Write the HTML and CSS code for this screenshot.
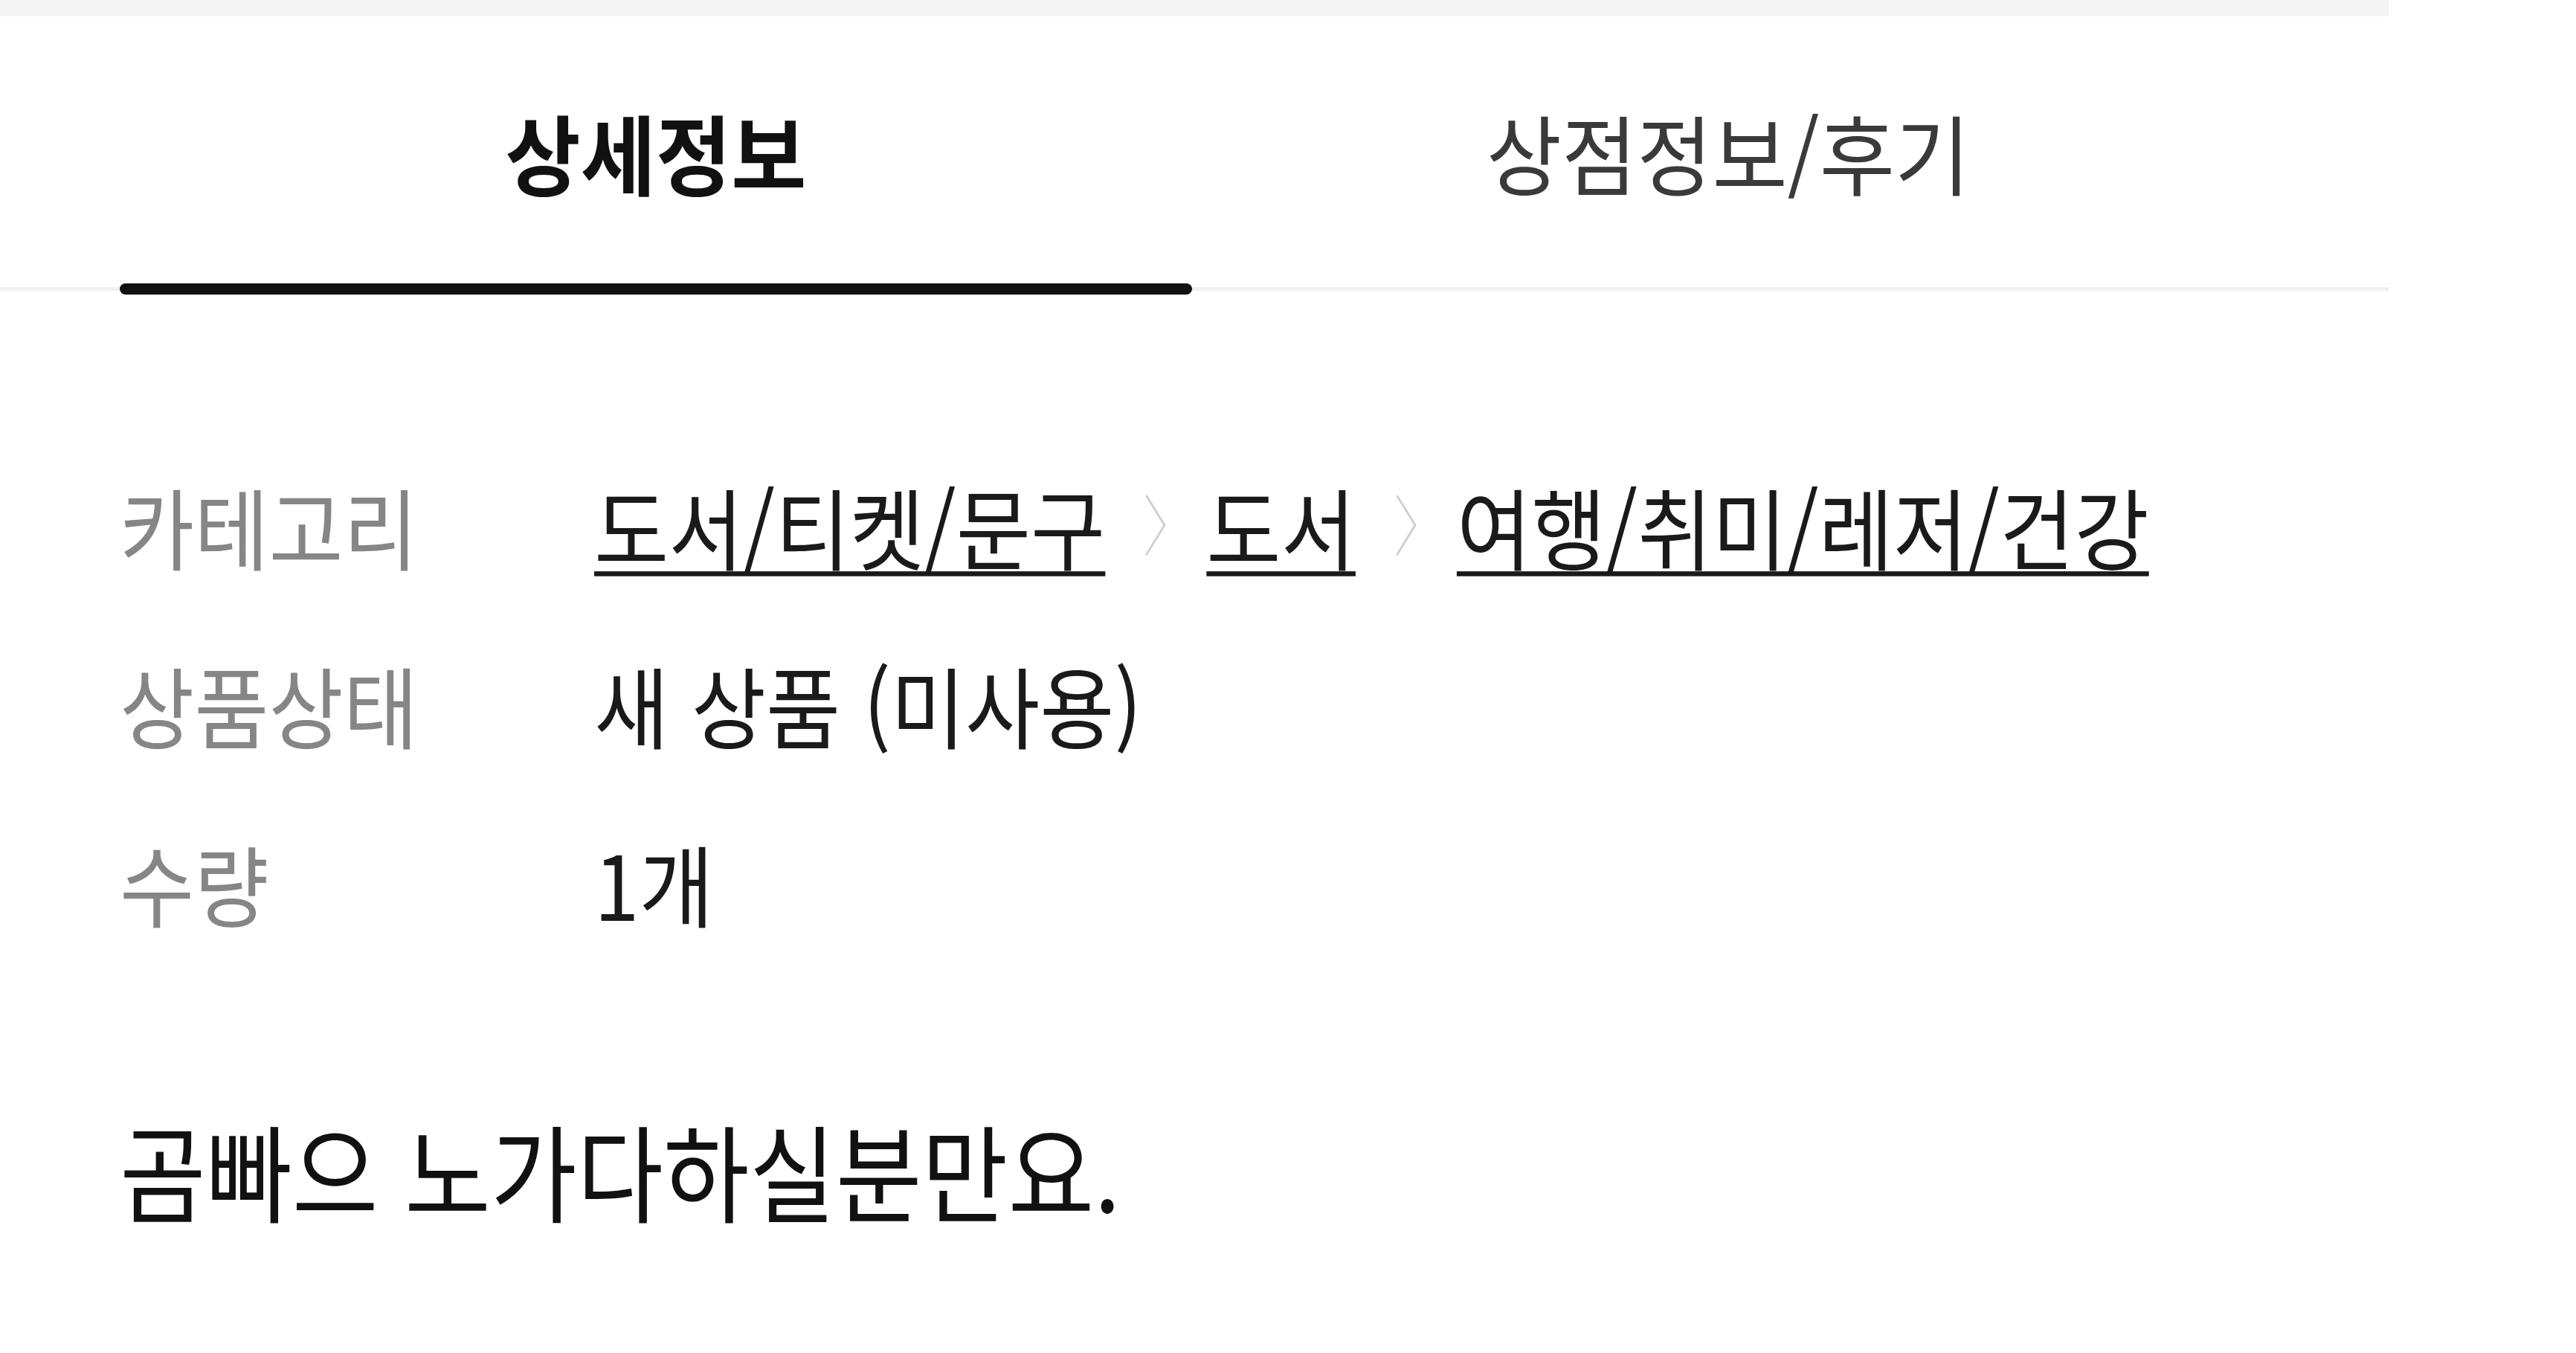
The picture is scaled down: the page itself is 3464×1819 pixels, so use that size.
FILE: index.html
```html
<!DOCTYPE html>
<html lang="ko">
<head>
<meta charset="utf-8">
<title>상세정보</title>
<link rel="stylesheet" href="styles.css">
</head>
<body>
<div class="page">
  <div class="topband"></div>
  <nav class="tabs">
    <div class="tab active"><span class="tall">상세정보</span></div>
    <div class="tab"><span class="tall">상점정보/후기</span></div>
  </nav>
  <section class="info">
    <div class="row">
      <div class="label"><span class="tall">카테고리</span></div>
      <div class="value crumbs">
        <a class="crumb tall">도서/티켓/문구</a>
        <svg class="sep" viewBox="0 0 36 84" width="36" height="84"><polyline points="6,3 30,42 6,81" fill="none" stroke="#d0d0d0" stroke-width="3" stroke-linecap="round" stroke-linejoin="round"/></svg>
        <a class="crumb tall">도서</a>
        <svg class="sep" viewBox="0 0 36 84" width="36" height="84"><polyline points="6,3 30,42 6,81" fill="none" stroke="#d0d0d0" stroke-width="3" stroke-linecap="round" stroke-linejoin="round"/></svg>
        <a class="crumb tall">여행/취미/레저/건강</a>
      </div>
    </div>
    <div class="row">
      <div class="label"><span class="tall">상품상태</span></div>
      <div class="value"><span class="tall">새 상품 (미사용)</span></div>
    </div>
    <div class="row">
      <div class="label"><span class="tall">수량</span></div>
      <div class="value"><span class="tall">1개</span></div>
    </div>
  </section>
  <p class="desc"><span class="tall">곰빠으 노가다하실분만요.</span></p>
</div>
</body>
</html>
```
FILE: styles.css
```css
* { box-sizing: border-box; }
html, body { margin: 0; padding: 0; background: #ffffff; }
body {
  font-family: "Noto Sans CJK KR", "Noto Sans", "Liberation Sans", sans-serif;
  color: #1f1f1f;
  width: 3464px;
  height: 1819px;
  overflow: hidden;
}
.page { width: 3212px; }
.tall {
  display: inline-block;
  transform: scaleY(1.1);
  transform-origin: 50% 55%;
}
.topband { height: 22px; background: #f4f4f4; }

.tabs {
  display: grid;
  grid-template-columns: 1442px 1442px;
  padding: 0 0 0 161px;
  border-bottom: 5px solid #f0f0f0;
}
.tab {
  position: relative;
  height: 364px;
  display: flex;
  justify-content: center;
  padding-top: 131px;
  font-size: 110px;
  line-height: 1;
  color: #3a3a3a;
  font-weight: 400;
}
.tab .tall { transform: scaleY(1.06); }
.tab.active { color: #111; font-weight: 700; }
.tab.active::after {
  content: "";
  position: absolute;
  left: 0;
  right: 0;
  bottom: -10px;
  height: 15px;
  border-radius: 8px;
  background: #111;
}

.info { padding: 195px 161px 0 161px; }
.row {
  display: grid;
  grid-template-columns: 638px 1fr;
  align-items: center;
  height: 240px;
  font-size: 109px;
  line-height: 1;
}
.label { color: #868686; }
.value { color: #1a1a1a; font-weight: 400; }
.crumbs { display: flex; align-items: center; }
.crumb {
  color: #1a1a1a;
  text-decoration: underline;
  text-decoration-thickness: 6px;
  text-underline-offset: 9px;
}
.sep { margin: 0 50px; flex: none; }

.desc {
  margin: 203px 0 0 0;
  padding: 0 161px;
  font-size: 126px;
  line-height: 1;
  color: #111;
  font-weight: 400;
}
.desc .tall { transform: scaleY(1.13); }
```
